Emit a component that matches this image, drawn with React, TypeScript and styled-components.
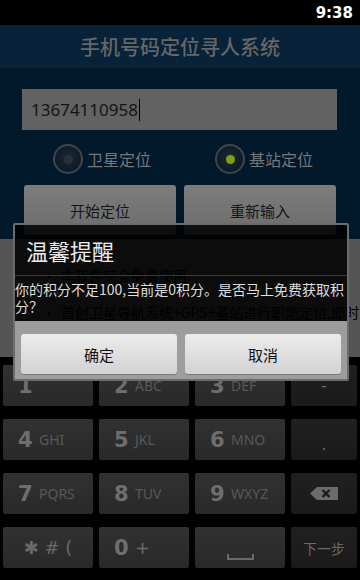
import React from 'react';
import styled, { createGlobalStyle } from 'styled-components';

const GlobalStyle = createGlobalStyle`
  html, body {
    margin: 0;
    padding: 0;
    background: #000;
  }
  body {
    font-family: "Noto Sans", "Noto Sans CJK SC", sans-serif;
  }
`;

const Screen = styled.div`
  position: relative;
  width: 360px;
  height: 580px;
  overflow: hidden;
  display: flex;
  flex-direction: column;
  background: #000;
`;

const StatusBar = styled.div`
  height: 25px;
  flex: none;
  display: flex;
  align-items: center;
  justify-content: flex-end;
  padding-right: 7px;
  background: #000;
  color: #fff;
  font-family: "DejaVu Sans", "Noto Sans", sans-serif;
  font-weight: bold;
  font-size: 15px;
`;

const TitleBar = styled.div`
  height: 43px;
  flex: none;
  display: flex;
  align-items: center;
  justify-content: center;
  background: #072239;
  color: #666;
  font-family: "Noto Sans CJK SC", sans-serif;
  font-size: 20px;
  font-weight: 500;
`;

const Form = styled.div`
  flex: none;
  background: #02192b;
  padding: 21px 0 4px;
  display: flex;
  flex-direction: column;
`;

const PhoneInput = styled.div`
  margin: 0 23px 0 22px;
  height: 41px;
  background: #626262;
  display: flex;
  align-items: center;
  padding-left: 9px;
  color: #141414;
  font-family: "Noto Sans", sans-serif;
  font-size: 17px;
`;

const Caret = styled.span`
  display: inline-block;
  width: 1px;
  height: 22px;
  margin-left: 1px;
  background: #000;
`;

const RadioRow = styled.div`
  margin-top: 14px;
  height: 30px;
  display: flex;
  align-items: center;
  padding-left: 53px;
  gap: 64px;
`;

const RadioItem = styled.div`
  display: flex;
  align-items: center;
  gap: 4px;
  color: #767676;
  font-family: "Noto Sans CJK SC", sans-serif;
  font-size: 16px;
`;

const RadioCircle = styled.span<{ $checked: boolean }>`
  width: 26px;
  height: 26px;
  border-radius: 50%;
  border: 2px solid #3b4650;
  background: radial-gradient(circle at 50% 45%, #1c2a36 0%, #0c1822 80%);
  display: flex;
  align-items: center;
  justify-content: center;
  &::after {
    content: '';
    width: 9px;
    height: 9px;
    border-radius: 50%;
    background: ${({ $checked }) => ($checked ? '#7fa012' : '#26323c')};
  }
`;

const ButtonRow = styled.div`
  margin-top: 11px;
  display: flex;
  gap: 8px;
  padding: 0 24px;
`;

const FormButton = styled.div`
  flex: 1;
  height: 50px;
  border-radius: 3px;
  background: linear-gradient(#7c7c7c, #6c6c6c);
  display: flex;
  align-items: center;
  justify-content: center;
  color: #161616;
  font-family: "Noto Sans CJK SC", sans-serif;
  font-size: 15px;
`;

const Content = styled.div`
  flex: 1;
  background: #555;
  padding: 28px 0 0 42px;
  display: flex;
  flex-direction: column;
  gap: 20px;
`;

const Bullet = styled.div`
  white-space: nowrap;
  color: #000;
  font-family: "Noto Sans CJK SC", sans-serif;
  font-size: 14px;
  line-height: 17px;
  &::before {
    content: '•';
    display: inline-block;
    width: 19px;
  }
`;

const Keyboard = styled.div`
  flex: none;
  height: 223px;
  box-sizing: border-box;
  background: #000;
  padding: 8px 3px 0;
  display: grid;
  grid-template-columns: 90px 90px 90px 66px;
  grid-auto-rows: 41px;
  column-gap: 6px;
  row-gap: 13px;
`;

const Key = styled.div<{ $fn?: boolean; $center?: boolean }>`
  position: relative;
  border-radius: 2px;
  background: ${({ $fn }) =>
    $fn ? 'linear-gradient(#202020, #1a1a1a)' : 'linear-gradient(#313131, #292929)'};
  display: flex;
  align-items: center;
  justify-content: ${({ $fn, $center }) => ($fn || $center ? 'center' : 'flex-start')};
  padding-left: ${({ $fn, $center }) => ($fn || $center ? '0' : '15px')};
  color: #6c6c6c;
  font-family: "Noto Sans CJK SC", sans-serif;
`;

const Digit = styled.span`
  font-family: "DejaVu Sans", sans-serif;
  font-weight: bold;
  font-size: 21px;
  width: 21px;
  color: #6e6e6e;
`;

const Letters = styled.span`
  font-family: "Noto Sans", sans-serif;
  font-size: 14px;
  color: #585858;
`;

const Symbol = styled.span<{ $size: number; $drop?: number }>`
  font-family: "DejaVu Sans", sans-serif;
  font-size: ${({ $size }) => $size}px;
  color: #6a6a6a;
  margin-top: ${({ $drop }) => $drop ?? 0}px;
`;

const NextLabel = styled.span`
  font-size: 14px;
  color: #6a6a6a;
`;

const SpaceMark = styled.span`
  position: absolute;
  left: 32px;
  bottom: 8px;
  width: 23px;
  height: 4px;
  border: 2px solid #6a6a6a;
  border-top: none;
`;

const Dialog = styled.div`
  position: absolute;
  left: 13px;
  top: 223px;
  width: 336px;
  box-sizing: border-box;
  border: 2px solid #6c6c6c;
  border-radius: 2px;
  display: flex;
  flex-direction: column;
  z-index: 2;
`;

const DialogTitle = styled.div`
  height: 50px;
  display: flex;
  align-items: center;
  padding-left: 11px;
  background: rgba(0, 0, 0, 0.86);
  border-bottom: 1px solid #3a3a3a;
  color: #ebebeb;
  font-family: "Noto Sans CJK SC", sans-serif;
  font-size: 22px;
`;

const DialogMessage = styled.div`
  height: 45px;
  box-sizing: border-box;
  padding-top: 5px;
  background: rgba(0, 0, 0, 0.86);
  color: #dedede;
  font-family: "Noto Sans CJK SC", sans-serif;
  font-size: 14px;
  line-height: 17px;
`;

const DialogButtons = styled.div`
  height: 58px;
  box-sizing: border-box;
  background: #9d9d9d;
  padding: 13px 6px 5px;
  display: flex;
  gap: 8px;
`;

const DialogButton = styled.div`
  flex: 1;
  border-radius: 3px;
  background: linear-gradient(#ececec, #d2d2d2);
  box-shadow: 0 1px 0 #7a7a7a;
  display: flex;
  align-items: center;
  justify-content: center;
  color: #111;
  font-family: "Noto Sans CJK SC", sans-serif;
  font-size: 15px;
`;

function BackspaceIcon() {
  return (
    <svg width="28" height="13" viewBox="0 0 28 13">
      <polygon points="0,6.5 7,0 28,0 28,13 7,13" fill="#6c6c6c" />
      <path d="M12.5 3 L19.5 10 M19.5 3 L12.5 10" stroke="#1b1b1b" strokeWidth="2.4" />
    </svg>
  );
}

const DIGIT_KEYS: Array<[string, string]> = [
  ['1', ''],
  ['2', 'ABC'],
  ['3', 'DEF'],
  ['4', 'GHI'],
  ['5', 'JKL'],
  ['6', 'MNO'],
  ['7', 'PQRS'],
  ['8', 'TUV'],
  ['9', 'WXYZ'],
];

function DigitKey({ d, l }: { d: string; l: string }) {
  return (
    <Key>
      <Digit>{d}</Digit>
      <Letters>{l}</Letters>
    </Key>
  );
}

export default function App() {
  const row = (i: number) => DIGIT_KEYS.slice(i * 3, i * 3 + 3).map(([d, l]) => <DigitKey key={d} d={d} l={l} />);

  return (
    <>
      <GlobalStyle />
      <Screen>
        <StatusBar>9:38</StatusBar>
        <TitleBar>手机号码定位寻人系统</TitleBar>
        <Form>
          <PhoneInput>
            13674110958
            <Caret />
          </PhoneInput>
          <RadioRow>
            <RadioItem>
              <RadioCircle $checked={false} />
              卫星定位
            </RadioItem>
            <RadioItem>
              <RadioCircle $checked />
              基站定位
            </RadioItem>
          </RadioRow>
          <ButtonRow>
            <FormButton>开始定位</FormButton>
            <FormButton>重新输入</FormButton>
          </ButtonRow>
        </Form>
        <Content>
          <Bullet>本软件完全免费使用.</Bullet>
          <Bullet>首创卫星导航系统+GPS+基站进行职能定位,即时</Bullet>
        </Content>
        <Keyboard>
          {row(0)}
          <Key $fn>
            <Symbol $size={16}>-</Symbol>
          </Key>
          {row(1)}
          <Key $fn>
            <Symbol $size={16} $drop={10}>.</Symbol>
          </Key>
          {row(2)}
          <Key $fn>
            <BackspaceIcon />
          </Key>
          <Key $center>
            <Symbol $size={18}>✱ # (</Symbol>
          </Key>
          <Key>
            <Digit>0</Digit>
            <Symbol $size={18}>+</Symbol>
          </Key>
          <Key>
            <SpaceMark />
          </Key>
          <Key $fn>
            <NextLabel>下一步</NextLabel>
          </Key>
        </Keyboard>
        <Dialog>
          <DialogTitle>温馨提醒</DialogTitle>
          <DialogMessage>你的积分不足100,当前是0积分。是否马上免费获取积分？</DialogMessage>
          <DialogButtons>
            <DialogButton>确定</DialogButton>
            <DialogButton>取消</DialogButton>
          </DialogButtons>
        </Dialog>
      </Screen>
    </>
  );
}
